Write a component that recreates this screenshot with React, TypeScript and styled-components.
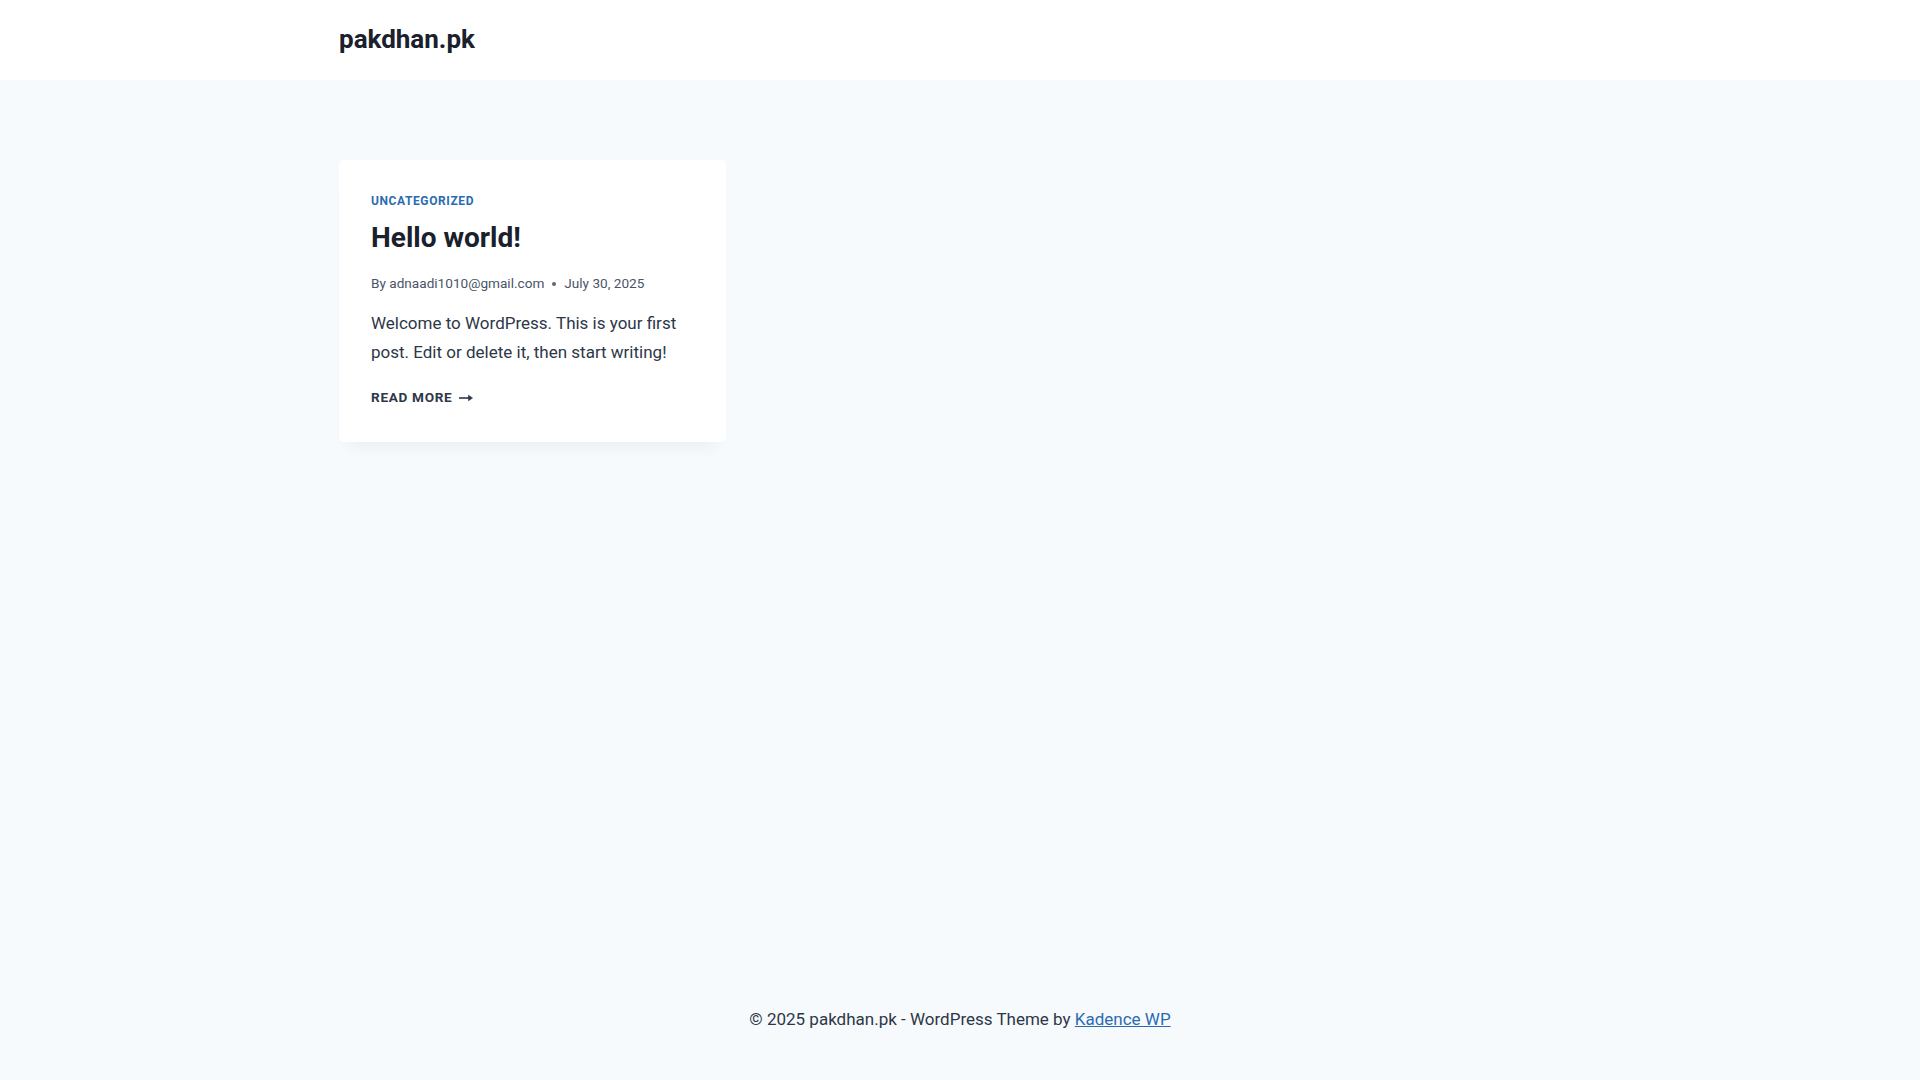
import React from "react";
import styled, { createGlobalStyle } from "styled-components";

const Global = createGlobalStyle`
  html, body { margin: 0; padding: 0; }
  body {
    background: #f7fafc;
    font-family: Roboto, "Liberation Sans", Arial, sans-serif;
    font-size: 17px;
    line-height: 1.6;
    color: #2d3748;
    -webkit-font-smoothing: antialiased;
  }
  * { box-sizing: border-box; }
`;

const Page = styled.div`
  min-height: 100vh;
  display: flex;
  flex-direction: column;
`;

const Header = styled.header`
  background: #ffffff;
  height: 80px;
  display: flex;
  align-items: center;
`;

const Container = styled.div`
  width: 100%;
  max-width: 1290px;
  margin: 0 auto;
  padding: 0 24px;
`;

const SiteTitle = styled.a`
  font-size: 26px;
  font-weight: 700;
  line-height: 1.2;
  color: #1a202c;
  text-decoration: none;
  display: inline-block;
  margin-top: 1px;
`;

const Main = styled.main`
  flex: 1;
  padding-top: 80px;
`;

const Grid = styled.div`
  display: grid;
  grid-template-columns: repeat(3, 1fr);
  column-gap: 40px;
`;

const Card = styled.article`
  background: #ffffff;
  border-radius: 5px;
  box-shadow: 0px 15px 15px -10px rgba(0, 0, 0, 0.05);
  padding: 32px;
`;

const Taxonomy = styled.a`
  display: block;
  font-size: 12px;
  font-weight: 700;
  letter-spacing: 0.05em;
  text-transform: uppercase;
  color: #2b6cb0;
  text-decoration: none;
  line-height: 1.2;
  margin-top: 2px;
`;

const Title = styled.h2`
  margin: 9px 0 0;
  font-size: 28px;
  font-weight: 700;
  line-height: 1.5;
  color: #1a202c;
`;

const Meta = styled.div`
  display: flex;
  align-items: center;
  font-size: 13.6px;
  color: #4a5568;
  margin-top: 14px;
  line-height: 1.6;
`;

const Author = styled.span`
  color: #4a5568;
`;

const Dot = styled.span`
  display: inline-block;
  width: 4px;
  height: 4px;
  border-radius: 50%;
  background: #4a5568;
  margin: 0 8px 0 8px;
  opacity: 0.9;
`;

const Excerpt = styled.p`
  margin: 14px 0 0;
  font-size: 17px;
  line-height: 1.68;
  color: #2d3748;
`;

const ReadMore = styled.a`
  display: inline-flex;
  align-items: center;
  gap: 7px;
  margin-top: 21px;
  font-size: 13.6px;
  font-weight: 700;
  letter-spacing: 0.05em;
  text-transform: uppercase;
  color: #2d3748;
  text-decoration: none;
  line-height: 1.6;
`;

const Footer = styled.footer`
  padding: 30px 0 47px;
  text-align: center;
  font-size: 17px;
  line-height: 27px;
  color: #2d3748;
`;

const FooterLink = styled.a`
  color: #2b6cb0;
  text-decoration: underline;
`;

const Arrow = () => (
  <svg width="14" height="8" viewBox="0 0 14 8" aria-hidden="true">
    <path d="M0 4h12" stroke="#2d3748" strokeWidth="1.6" fill="none" />
    <path d="M9.5 1.2L13.5 4l-4 2.8z" fill="#2d3748" stroke="#2d3748" strokeWidth="0.6" strokeLinejoin="round" />
  </svg>
);

export default function App() {
  return (
    <Page>
      <Global />
      <Header>
        <Container>
          <SiteTitle href="#">pakdhan.pk</SiteTitle>
        </Container>
      </Header>
      <Main>
        <Container>
          <Grid>
            <Card>
              <Taxonomy href="#">Uncategorized</Taxonomy>
              <Title>Hello world!</Title>
              <Meta>
                <span>
                  By <Author>adnaadi1010@gmail.com</Author>
                </span>
                <Dot />
                <span>July 30, 2025</span>
              </Meta>
              <Excerpt>
                Welcome to WordPress. This is your first post. Edit or delete it, then start writing!
              </Excerpt>
              <ReadMore href="#">
                Read More <Arrow />
              </ReadMore>
            </Card>
          </Grid>
        </Container>
      </Main>
      <Footer>
        © 2025 pakdhan.pk - WordPress Theme by <FooterLink href="#">Kadence WP</FooterLink>
      </Footer>
    </Page>
  );
}
